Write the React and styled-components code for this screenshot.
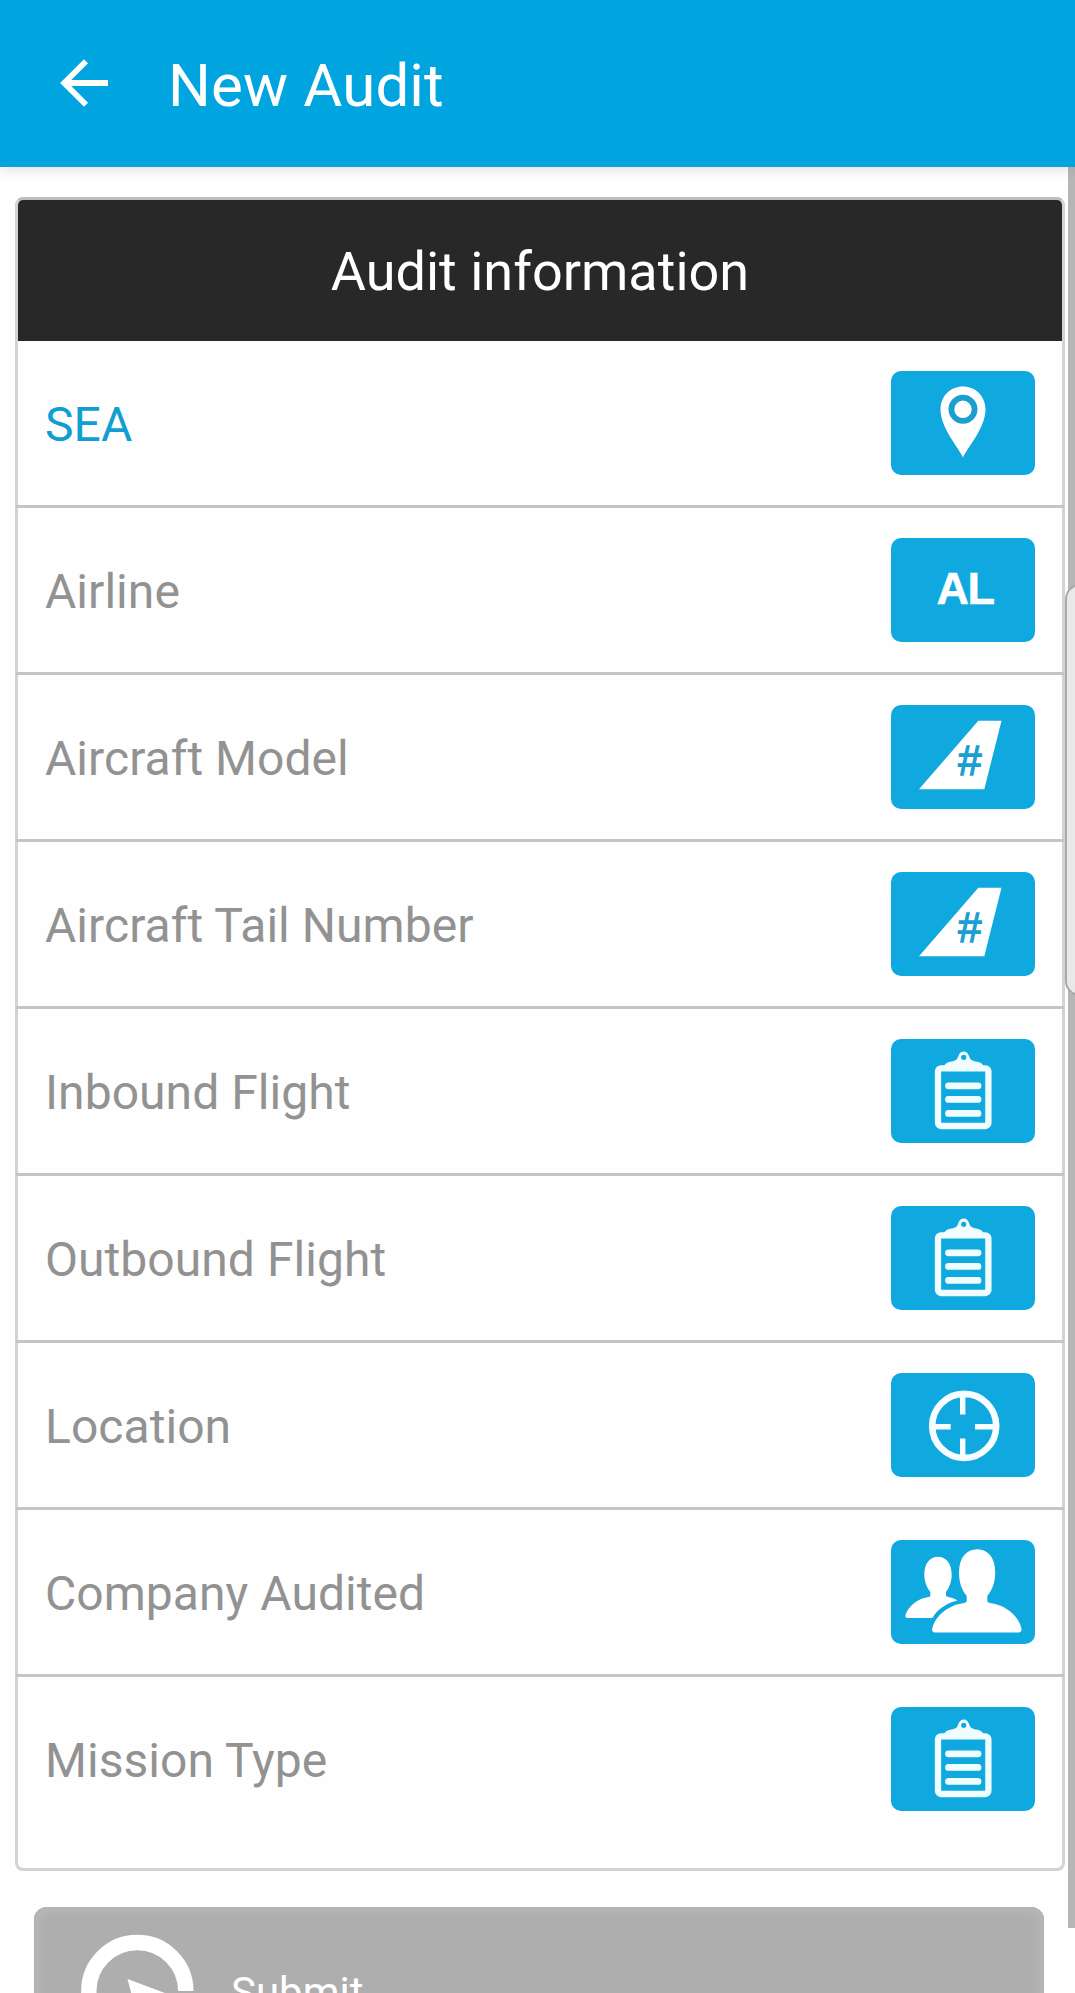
import React from "react";
import styled, { createGlobalStyle } from "styled-components";

const GlobalStyle = createGlobalStyle`
  * { box-sizing: border-box; }
  body {
    margin: 0;
    background: #fefefe;
    font-family: Roboto, "Liberation Sans", sans-serif;
  }
`;

const Screen = styled.div`
  position: relative;
  width: 1075px;
  height: 1993px;
  overflow: hidden;
  background: #fefefe;
`;

const AppBar = styled.header`
  position: relative;
  z-index: 1;
  display: flex;
  align-items: center;
  gap: 60px;
  height: 167px;
  padding: 0 0 0 60px;
  background: #00a4de;
  border-bottom: 1px solid #1c9cc8;
  box-shadow: 0 2px 12px rgba(0, 0, 0, 0.13);
`;

const BackIcon = styled.svg`
  display: block;
  width: 48px;
  height: 48px;
  margin-bottom: 1px;
`;

const Title = styled.h1`
  margin: 5px 0 0;
  font-size: 60px;
  line-height: 70px;
  font-weight: 400;
  letter-spacing: 0.15px;
  color: #fff;
`;

const Card = styled.section`
  width: 1050px;
  height: 1674px;
  margin: 30px 0 0 15px;
  border: 3px solid #d3d3d3;
  border-top-color: #bdbdbd;
  border-radius: 8px;
`;

const CardHeader = styled.h2`
  display: flex;
  align-items: center;
  justify-content: center;
  height: 141px;
  margin: 0;
  padding-top: 1px;
  border-radius: 5px 5px 0 0;
  background: #282828;
  color: #fff;
  font-size: 54px;
  font-weight: 400;
`;

const Row = styled.div`
  display: flex;
  align-items: center;
  justify-content: space-between;
  height: 167px;
  margin: 0 -2px;
  padding: 0 29px;
  border-bottom: 3px solid ${(p) => (p.$last ? "transparent" : "#c5c5c5")};
`;

const Label = styled.span`
  margin-top: 3px;
  font-size: 48px;
  line-height: 56px;
  letter-spacing: 0.05px;
  color: ${(p) => (p.$active ? "#109fd0" : "#929292")};
`;

const Tile = styled.button`
  display: block;
  width: 144px;
  height: 104px;
  padding: 0;
  border: 0;
  border-radius: 10px;
  background: #0fa8df;
`;

const TileIcon = styled.svg`
  display: block;
  width: 144px;
  height: 104px;
`;

const Submit = styled.button`
  display: flex;
  align-items: flex-start;
  gap: 37px;
  width: 1010px;
  height: 166px;
  margin: 36px 0 0 34px;
  padding: 27px 0 0 47px;
  border: 0;
  border-radius: 13px;
  background: #aeaeae;
  box-shadow: inset 0 0 2px 1px #b0b0b0, inset 0 0 10px 4px #bababa;
  color: #fff;
  font-family: inherit;
`;

const SubmitIcon = styled.svg`
  display: block;
  width: 113px;
  height: 113px;
`;

const SubmitText = styled.span`
  margin-top: 34px;
  font-size: 42px;
  line-height: 50px;
`;

const ScrollTrack = styled.div`
  position: absolute;
  top: 167px;
  right: 0;
  width: 7px;
  height: 1761px;
  background: #b6b6b6;
`;

const EdgeHandle = styled.div`
  position: absolute;
  top: 584px;
  left: 1065px;
  width: 30px;
  height: 412px;
  border: 2px solid #a9a9a9;
  border-radius: 16px;
  background: #e9e9e9;
`;

const PinIcon = () => (
  <TileIcon viewBox="0 0 144 104">
    <path
      d="M72 86.500C68 77 49.500 57 49.500 38.500C49.500 25 59.500 15.500 72 15.500S94.500 25 94.500 38.500C94.500 57 76 77 72 86.500Z"
      fill="#fff"
    />
    <circle cx="72" cy="38.300" r="11.600" fill="none" stroke="#1b9fd0" strokeWidth="5.800" />
  </TileIcon>
);

const AirlineIcon = () => (
  <TileIcon viewBox="0 0 144 104">
    <text
      x="45.500"
      y="66"
      textLength="58.500"
      fontFamily="Liberation Sans, sans-serif"
      fontSize="45"
      fontWeight="700"
      fill="#fff"
      stroke="#fff"
      strokeWidth="0.500"
    >
      AL
    </text>
  </TileIcon>
);

const TailIcon = () => (
  <TileIcon viewBox="0 0 144 104">
    <path d="M87.300 15.700H110.500L93.300 84.300H28Z" fill="#fff" />
    <text
      x="66.500"
      y="69.500"
      fontFamily="Liberation Sans, sans-serif"
      fontSize="42"
      fontStyle="italic"
      fill="#1b9fd0"
      stroke="#1b9fd0"
      strokeWidth="1.300"
    >
      #
    </text>
  </TileIcon>
);

const ClipboardIcon = () => (
  <TileIcon viewBox="0 0 144 104">
    <rect x="47" y="29.300" width="50.400" height="57.700" rx="3" fill="none" stroke="#f0fdff" strokeWidth="6.300" />
    <path
      fillRule="evenodd"
      d="M53 31.500V27C55 23.500 58 23 62 22.300C66 21.300 66.500 19.500 67.300 17.300C68.300 14.300 70 12.500 72.700 12.500S77.100 14.300 78.100 17.300C78.900 19.500 79.500 21.300 83.500 22.300C87.500 23 90.500 23.500 92.500 27V31.500ZM72.700 15.700a2.600 2.600 0 1 0 0 5.200a2.600 2.600 0 1 0 0-5.200Z"
      fill="#f0fdff"
    />
    <path d="M57.500 46.800H87M57.500 60.400H87M57.500 74.400H87" stroke="#f0fdff" strokeWidth="6.800" strokeLinecap="round" />
  </TileIcon>
);

const TargetIcon = () => (
  <TileIcon viewBox="0 0 144 104">
    <g fill="none" stroke="#f8feff">
      <circle cx="73.200" cy="52.900" r="32" strokeWidth="6.600" />
      <path d="M71.700 22V41.600M71.700 65.400V84M42 53.700H59.700M84 53.700H104" strokeWidth="5.400" />
    </g>
  </TileIcon>
);

const PeopleIcon = () => (
  <TileIcon viewBox="0 0 144 104">
    <g fill="#fff">
      <path d="M39.300 56V52C35.500 47 33.300 41.500 33.300 35C33.300 23 39 16.700 47 16.700S60.700 23 60.700 35C60.700 41.500 58.500 47 55 52V56C58 57.500 62.500 57.700 66.500 60.500C57 62.500 46 69 41.500 78H16.500C14.500 78 14 76.500 14.700 74.500C18 65 28 58.500 36.500 57.300C38 57 39 57 39.300 56Z" />
      <path d="M75.700 61V56C70.500 49.500 68 42 68 32.500C68 17.500 75.500 9.300 86.200 9.300S104.200 17.500 104.200 32.500C104.200 42 101.500 49.500 96.300 56V61C97 62.500 98 63 100 63.200C114 65 127 75 130.200 87.500C131 91 130 92.400 127.500 92.400H44C41.500 92.400 40.700 91 41.500 87.500C45 75 58 65 72 63.200C74 63 75.200 62.500 75.700 61Z" />
    </g>
  </TileIcon>
);

const fields = [
  { label: "SEA", icon: PinIcon, active: true },
  { label: "Airline", icon: AirlineIcon },
  { label: "Aircraft Model", icon: TailIcon },
  { label: "Aircraft Tail Number", icon: TailIcon },
  { label: "Inbound Flight", icon: ClipboardIcon },
  { label: "Outbound Flight", icon: ClipboardIcon },
  { label: "Location", icon: TargetIcon },
  { label: "Company Audited", icon: PeopleIcon },
  { label: "Mission Type", icon: ClipboardIcon },
];

export default function App() {
  return (
    <>
      <GlobalStyle />
      <Screen>
        <AppBar>
          <BackIcon viewBox="0 0 48 48">
            <path d="M26 2.200L4.200 24L26 45.800M4.200 24H48" fill="none" stroke="#fff" strokeWidth="5.800" />
          </BackIcon>
          <Title>New Audit</Title>
        </AppBar>
        <Card>
          <CardHeader>Audit information</CardHeader>
          {fields.map(({ label, icon: Icon, active }, i) => (
            <Row key={label} $last={i === fields.length - 1}>
              <Label $active={active}>{label}</Label>
              <Tile aria-label={label}>
                <Icon />
              </Tile>
            </Row>
          ))}
        </Card>
        <Submit>
          <SubmitIcon viewBox="0 0 113 113">
            <path d="M104.800 57A48.500 48.500 0 1 0 56.300 105.500" fill="none" stroke="#fff" strokeWidth="15.400" />
            <path d="M46.500 45L100 65L78 75L98 95L90 103L70 83L62 103Z" fill="#fff" />
          </SubmitIcon>
          <SubmitText>Submit</SubmitText>
        </Submit>
        <ScrollTrack />
        <EdgeHandle />
      </Screen>
    </>
  );
}
